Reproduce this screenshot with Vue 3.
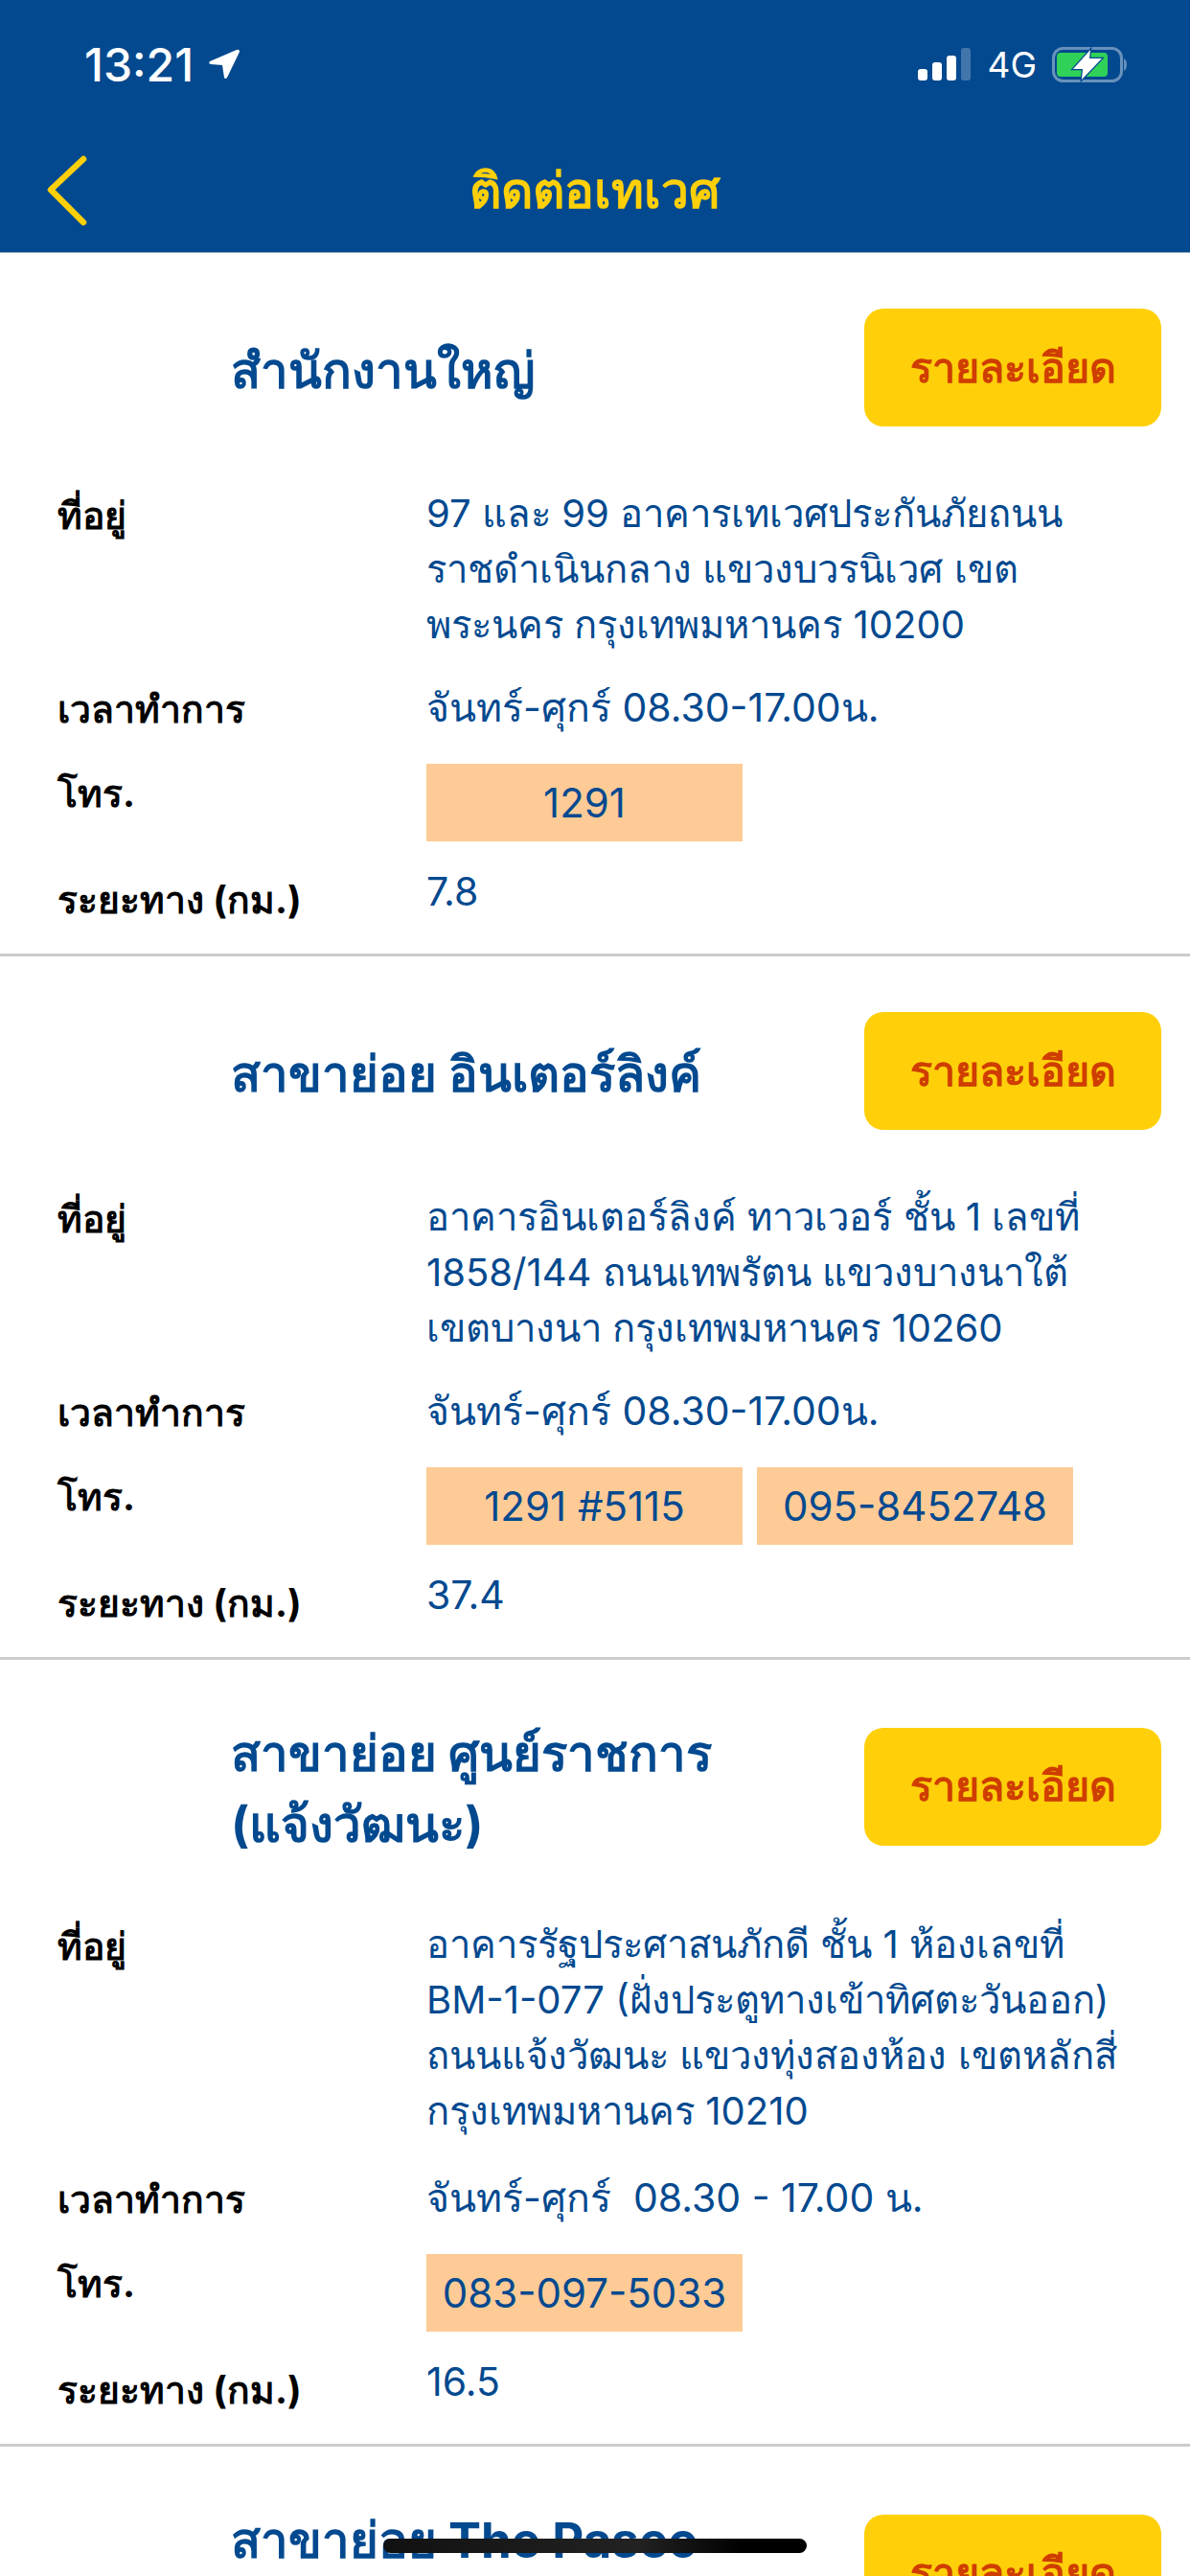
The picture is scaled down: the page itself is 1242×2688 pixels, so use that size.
<template>
  <div class="page">
    <header class="top">
      <div class="status">
        <div class="time">
          <span>13:21</span>
          <svg class="arrow" viewBox="0 0 34 32"><path d="M30 1 L2 13 Q0 15 3 16 L15 17 L17 30 Q18 32 20 30 L33 3 Q33 0 30 1 Z" fill="#fff" /></svg>
        </div>
        <div class="indicators">
          <svg class="signal" viewBox="0 0 56 34">
            <rect x="0" y="22" width="10" height="12" rx="3" fill="#fff" />
            <rect x="15" y="15" width="10" height="19" rx="3" fill="#fff" />
            <rect x="30" y="8" width="10" height="26" rx="3" fill="#fff" />
            <rect x="45" y="0" width="10" height="34" rx="3" fill="#fff" opacity="0.25" />
          </svg>
          <span class="net">4G</span>
          <svg class="battery" viewBox="0 0 80 37">
            <rect x="1.5" y="1.5" width="71" height="34" rx="10" fill="none" stroke="#fff" stroke-opacity="0.4" stroke-width="3" />
            <rect x="5" y="6" width="53" height="25" rx="4" fill="#30d158" />
            <path d="M75 12 C79 14 79 23 75 25 Z" fill="#fff" opacity="0.4" />
            <path d="M40 3 L22 23 L32 23 L31 34 L52 12 L39 12 Z" fill="#fff" stroke="#03498f" stroke-width="2.5" paint-order="stroke" />
          </svg>
        </div>
      </div>
      <div class="nav">
        <svg class="back" viewBox="0 0 44 74"><path d="M38 4 L4 36 L38 70" fill="none" stroke="#ffd00a" stroke-width="6.5" stroke-linecap="round" stroke-linejoin="round" /></svg>
        <h1>ติดต่อเทเวศ</h1>
      </div>
    </header>

    <section v-for="office in offices" :key="office.name" class="office">
      <div class="office-head">
        <h2>{{ office.name }}</h2>
        <button class="detail">รายละเอียด</button>
      </div>
      <div v-if="office.address" class="rows">
        <div class="label">ที่อยู่</div>
        <div class="address">
          <div v-for="line in office.address" :key="line">{{ line }}</div>
        </div>
        <div class="label">เวลาทำการ</div>
        <div class="hours">{{ office.hours }}</div>
        <div class="label">โทร.</div>
        <div class="phones">
          <span v-for="phone in office.phones" :key="phone" class="phone">{{ phone }}</span>
        </div>
        <div class="label distance-label">ระยะทาง (กม.)</div>
        <div class="distance">{{ office.distance }}</div>
      </div>
    </section>

    <div class="home-bar"></div>
  </div>
</template>

<script setup>
const offices = [
  {
    name: "สำนักงานใหญ่",
    address: [
      "97 และ 99 อาคารเทเวศประกันภัยถนน",
      "ราชดำเนินกลาง แขวงบวรนิเวศ เขต",
      "พระนคร กรุงเทพมหานคร 10200",
    ],
    hours: "จันทร์-ศุกร์ 08.30-17.00น.",
    phones: ["1291"],
    distance: "7.8",
  },
  {
    name: "สาขาย่อย อินเตอร์ลิงค์",
    address: [
      "อาคารอินเตอร์ลิงค์ ทาวเวอร์ ชั้น 1 เลขที่",
      "1858/144 ถนนเทพรัตน แขวงบางนาใต้",
      "เขตบางนา กรุงเทพมหานคร 10260",
    ],
    hours: "จันทร์-ศุกร์ 08.30-17.00น.",
    phones: ["1291 #5115", "095-8452748"],
    distance: "37.4",
  },
  {
    name: "สาขาย่อย ศูนย์ราชการ (แจ้งวัฒนะ)",
    address: [
      "อาคารรัฐประศาสนภักดี ชั้น 1 ห้องเลขที่",
      "BM-1-077 (ฝั่งประตูทางเข้าทิศตะวันออก)",
      "ถนนแจ้งวัฒนะ แขวงทุ่งสองห้อง เขตหลักสี่",
      "กรุงเทพมหานคร 10210",
    ],
    hours: "จันทร์-ศุกร์  08.30 - 17.00 น.",
    phones: ["083-097-5033"],
    distance: "16.5",
  },
  {
    name: "สาขาย่อย The Paseo",
  },
];
</script>

<style>
html,
body {
  margin: 0;
  background: #fff;
}
</style>

<style scoped>
.page {
  position: relative;
  width: 1242px;
  height: 2688px;
  overflow: hidden;
  background: #fff;
  color: #03498f;
  font-family: Inter, "Liberation Sans", sans-serif;
}

.top {
  height: 263px;
  background: #03498f;
  border-bottom: 1px solid #9aa9bd;
}

.status {
  display: flex;
  justify-content: space-between;
  align-items: center;
  height: 134px;
  padding: 0 64px 0 88px;
}

.time {
  display: flex;
  align-items: center;
  gap: 15px;
  color: #fff;
  font-size: 48px;
  font-weight: 500;
}

.arrow {
  width: 34px;
  height: 32px;
}

.indicators {
  display: flex;
  align-items: center;
  gap: 16px;
  color: #fff;
}

.signal {
  width: 56px;
  height: 34px;
}

.net {
  font-size: 37px;
}

.battery {
  width: 80px;
  height: 37px;
}

.nav {
  position: relative;
  text-align: center;
}

.back {
  position: absolute;
  left: 49px;
  top: 28px;
  width: 44px;
  height: 74px;
}

.nav h1 {
  margin: 0;
  color: #ffd00a;
  font-size: 51.5px;
  font-weight: 700;
  line-height: 129px;
}

.office {
  padding: 58px 30px 0 60px;
  border-bottom: 3px solid #ccc;
}

.office-head {
  display: flex;
  align-items: center;
  justify-content: space-between;
}

.office-head h2 {
  width: 530px;
  margin: 0 0 -3px 181px;
  padding-top: 3px;
  font-size: 51px;
  font-weight: 700;
  line-height: 74px;
}

.office:last-of-type h2 {
  min-height: 148px;
}

.detail {
  width: 310px;
  height: 123px;
  border: none;
  border-radius: 20px;
  background: #ffd00a;
  color: #cf3d00;
  font-family: inherit;
  font-size: 43px;
  font-weight: 700;
}

.rows {
  display: grid;
  grid-template-columns: 385px 1fr;
  row-gap: 28px;
  margin-top: 62px;
  padding-bottom: 27px;
  font-size: 40px;
  line-height: 58px;
}

.address:has(> :nth-child(4)) {
  padding-bottom: 4px;
}

.hours {
  font-size: 41px;
  white-space: pre-wrap;
}

.label {
  color: #000;
  font-size: 39px;
  font-weight: 700;
  padding-top: 2px;
}

.phones {
  display: flex;
  gap: 15px;
}

.phone {
  width: 330px;
  height: 81px;
  background: #fecb96;
  font-size: 42px;
  line-height: 81px;
  text-align: center;
}

.distance {
  margin-top: -5px;
  font-size: 41px;
}

.distance-label {
  padding-top: 4px;
}

.home-bar {
  position: absolute;
  left: 400px;
  top: 2649px;
  width: 442px;
  height: 15px;
  border-radius: 8px;
  background: linear-gradient(90deg, #111, #222 60%, #000 85%);
}
</style>
